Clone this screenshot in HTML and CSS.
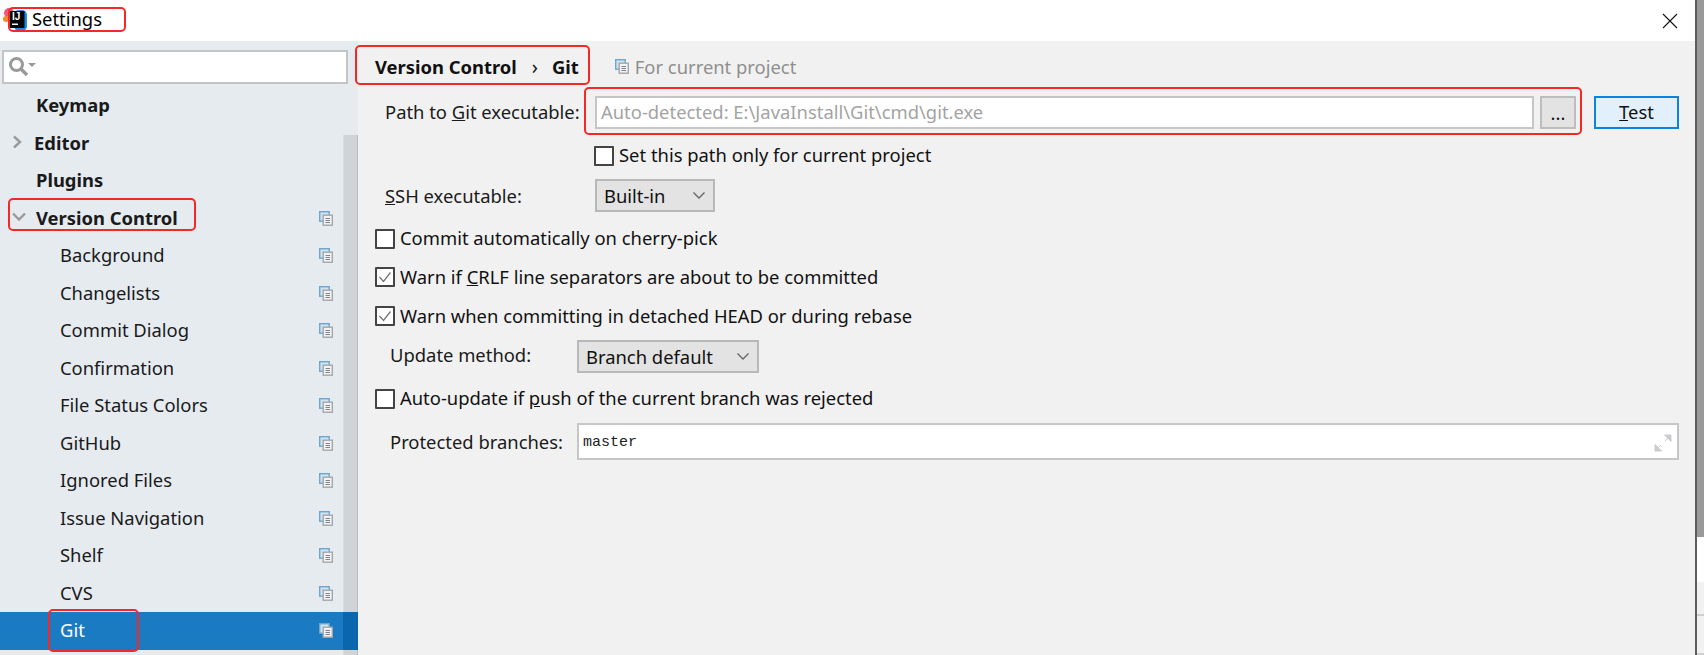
FILE: index.html
```html
<!DOCTYPE html>
<html lang="en">
<head>
  <meta charset="UTF-8">
  <title>Settings</title>
  <link rel="stylesheet" href="styles.css">
</head>
<body>
  <svg width="0" height="0" class="defs">
    <symbol id="copy" viewBox="0 0 14 15">
      <rect x="0.7" y="0.7" width="9.5" height="9.5" fill="#cfe2f0" stroke="#6ea6cc" stroke-width="1.4"/>
      <rect x="4.2" y="4.2" width="9.1" height="10" fill="#f2f2f2" stroke="#a3a7aa" stroke-width="1.4"/>
      <path d="M6.500 7.500h4.500M6.500 9.500h4.500M6.500 11.500h4.500" stroke="#7f8489" fill="none"/>
    </symbol>
  </svg>

  <div class="dialog">
    <div class="titlebar">
      <svg class="app-icon" width="26" height="26" viewBox="0 0 26 26">
        <circle cx="7" cy="6" r="5" fill="#f0567f"/>
        <circle cx="4" cy="12" r="3" fill="#f58a2e"/>
        <rect x="12" y="3" width="13" height="21" rx="5" fill="#1f8ceb"/>
        <rect x="8" y="4" width="14.500" height="17" fill="#000"/>
        <text x="10" y="13" class="app-icon-text">IJ</text>
        <rect x="10" y="16.500" width="6" height="1.500" fill="#fff"/>
      </svg>
      <span class="title">Settings</span>
      <svg class="close" width="16" height="16" viewBox="0 0 16 16">
        <path d="M1 1l14 14M15 1L1 15" stroke="#111" stroke-width="1.1" fill="none"/>
      </svg>
    </div>

    <div class="main">
      <!-- left tree -->
      <div class="sidebar">
        <div class="search">
          <svg width="30" height="22" viewBox="0 0 30 22">
            <circle cx="8.500" cy="8.500" r="6" fill="none" stroke="#999" stroke-width="3"/>
            <path d="M13 13l6 6" stroke="#999" stroke-width="3.400" fill="none"/>
            <path d="M20 7h8l-4 4z" fill="#999"/>
          </svg>
        </div>
        <div class="tree">
          <div class="row"><span class="top-label">Keymap</span></div>
          <div class="row">
            <svg class="arrow" width="12" height="14" viewBox="0 0 12 14"><path d="M3 1.500l6 5.500-6 5.500" stroke="#9a9a9a" stroke-width="2.400" fill="none"/></svg>
            <span class="top-label arrowed">Editor</span>
          </div>
          <div class="row"><span class="top-label">Plugins</span></div>
          <div class="row">
            <svg class="arrow" width="16" height="12" viewBox="0 0 16 12"><path d="M2 2.500l6 6 6-6" stroke="#9a9a9a" stroke-width="2.400" fill="none"/></svg>
            <span class="top-label">Version Control</span>
            <svg class="copy"><use href="#copy"/></svg>
          </div>
          <div class="row child">Background<svg class="copy"><use href="#copy"/></svg></div>
          <div class="row child">Changelists<svg class="copy"><use href="#copy"/></svg></div>
          <div class="row child">Commit Dialog<svg class="copy"><use href="#copy"/></svg></div>
          <div class="row child">Confirmation<svg class="copy"><use href="#copy"/></svg></div>
          <div class="row child">File Status Colors<svg class="copy"><use href="#copy"/></svg></div>
          <div class="row child">GitHub<svg class="copy"><use href="#copy"/></svg></div>
          <div class="row child">Ignored Files<svg class="copy"><use href="#copy"/></svg></div>
          <div class="row child">Issue Navigation<svg class="copy"><use href="#copy"/></svg></div>
          <div class="row child">Shelf<svg class="copy"><use href="#copy"/></svg></div>
          <div class="row child">CVS<svg class="copy"><use href="#copy"/></svg></div>
          <div class="row child selected">Git<svg class="copy"><use href="#copy"/></svg><span class="thumb-over"></span></div>
        </div>
        <div class="scrollbar"></div>
      </div>

      <!-- right panel -->
      <div class="panel">
        <div class="crumbs">
          <span class="crumb">Version Control</span>
          <span class="crumb-sep">›</span>
          <span class="crumb">Git</span>
          <svg class="crumb-icon"><use href="#copy"/></svg>
          <span class="crumb-note">For current project</span>
        </div>

        <div class="form-row">
          <span class="label path-label raised">Path to <u>G</u>it executable:</span>
          <div class="input path-input"><span class="raised">Auto-detected: E:\JavaInstall\Git\cmd\git.exe</span></div>
          <div class="btn dots">...</div>
          <div class="btn test"><span class="raised"><u>T</u>est</span></div>
        </div>

        <div class="form-row check-row indented gap-17">
          <span class="check"></span><span class="lifted">Set this path only for current project</span>
        </div>

        <div class="form-row gap-13">
          <span class="label path-label"><u>S</u>SH executable:</span>
          <div class="combo ssh">Built-in
            <svg width="14" height="9" viewBox="0 0 14 9"><path d="M1.500 1.500l5.500 5.500 5.500-5.500" stroke="#666" stroke-width="1.400" fill="none"/></svg>
          </div>
        </div>

        <div class="form-row check-row plain gap-17">
          <span class="check"></span><span class="lifted">Commit automatically on cherry-pick</span>
        </div>
        <div class="form-row check-row plain gap-18">
          <span class="check"><svg width="16" height="16" viewBox="0 0 16 16"><path d="M2.500 8l4 4.500 7-9" stroke="#777" stroke-width="1.300" fill="none"/></svg></span><span class="raised">Warn if <u>C</u>RLF line separators are about to be committed</span>
        </div>
        <div class="form-row check-row plain gap-19">
          <span class="check"><svg width="16" height="16" viewBox="0 0 16 16"><path d="M2.500 8l4 4.500 7-9" stroke="#777" stroke-width="1.300" fill="none"/></svg></span><span class="raised">Warn when committing in detached HEAD or during rebase</span>
        </div>

        <div class="form-row gap-14">
          <span class="label update-label lifted">Update method:</span>
          <div class="combo update">Branch default
            <svg width="14" height="9" viewBox="0 0 14 9"><path d="M1.500 1.500l5.500 5.500 5.500-5.500" stroke="#666" stroke-width="1.400" fill="none"/></svg>
          </div>
        </div>

        <div class="form-row check-row plain gap-16">
          <span class="check"></span><span class="lifted">Auto-update if <u>p</u>ush of the current branch was rejected</span>
        </div>

        <div class="form-row gap-14">
          <span class="label update-label">Protected branches:</span>
          <div class="input branches">
            <span class="mono">master</span>
            <svg width="18" height="18" viewBox="0 0 18 18"><path d="M10.500 1H17v6.500zM1 10.500V17h6.500zM15 3L11 7M3 15l4-4" fill="#c9ccce" stroke="#c9ccce"/></svg>
          </div>
        </div>
      </div>
    </div>
  </div>

  <div class="edge">
    <div class="edge-gray"></div>
    <div class="edge-white"></div>
    <div class="edge-low"></div>
    <div class="edge-low short"></div>
  </div>

  <!-- red marks drawn on the screenshot -->
  <div class="mark mark-title"></div>
  <div class="mark mark-vc"></div>
  <div class="mark mark-git"></div>
  <div class="mark mark-crumb"></div>
  <div class="mark mark-path"></div>
</body>
</html>
```

FILE: styles.css
```css
body {
  margin: 0;
  width: 1704px;
  height: 655px;
  overflow: hidden;
  position: relative;
  display: flex;
  background-color: #fff;
  color: #111;
  font-family: "Noto Sans", "Open Sans", Arial, sans-serif;
  font-size: 18.400px;
}
.defs {
  position: absolute;
}
.dialog {
  flex: 1;
  min-width: 0;
  display: flex;
  flex-direction: column;
}
.raised {
  margin-bottom: 2px;
}
.lifted {
  margin-bottom: 4px;
}

/* title bar */
.titlebar {
  height: 41px;
  flex: none;
  display: flex;
  align-items: center;
  padding-left: 2px;
  padding-right: 17px;
  background-color: #fff;
}
.app-icon {
  margin-top: -2px;
  flex: none;
}
.app-icon-text {
  fill: #fff;
  font-family: "Liberation Sans", Arial, sans-serif;
  font-size: 10px;
  font-weight: bold;
}
.title {
  margin-left: 4px;
  margin-bottom: 4px;
  color: #000;
}
.close {
  margin-left: auto;
}

.main {
  flex: 1;
  min-height: 0;
  display: flex;
}

/* sidebar */
.sidebar {
  width: 358px;
  flex: none;
  position: relative;
  background-color: #e6ebf0;
}
.search {
  height: 30px;
  width: 338px;
  margin: 9px 0 3px 2px;
  padding: 0 0 0 4px;
  display: flex;
  align-items: center;
  background-color: #fff;
  border: 2px solid #c2c4c6;
}
.row {
  height: 37.500px;
  box-sizing: border-box;
  padding-bottom: 2px;
  display: flex;
  align-items: center;
  position: relative;
  color: #1a1a1a;
}
.top-label {
  margin-left: 36px;
  font-weight: bold;
}
.arrow {
  margin-left: 11px;
  flex: none;
}
.arrow + .top-label {
  margin-left: 9px;
}
.arrow + .top-label.arrowed {
  margin-left: 11px;
}
.child {
  padding-left: 60px;
}
.copy {
  position: absolute;
  left: 319px;
  top: 11px;
  width: 14px;
  height: 15px;
}
.selected {
  background-color: #1a7bc3;
  color: #fff;
}
.thumb-over {
  position: absolute;
  right: 0;
  top: 0;
  bottom: 0;
  width: 15px;
  background-color: #0a66ad;
  z-index: 1;
}
.scrollbar {
  position: absolute;
  right: 0;
  top: 94px;
  bottom: 0;
  width: 13px;
  background-color: #cfd4d8;
  border-left: 1px solid #d9dee2;
  border-right: 1px solid #b9bdc0;
}

/* right panel */
.panel {
  flex: 1;
  min-width: 0;
  padding: 0 16px 0 0;
  background-color: #f1f1f1;
}
.crumbs {
  height: 50px;
  display: flex;
  align-items: center;
  padding-left: 17px;
  margin-bottom: 5px;
}
.crumb {
  font-weight: bold;
  color: #111;
}
.crumb-sep {
  margin: 0 14px 0 15px;
  font-size: 20px;
}
.crumb-icon {
  width: 14px;
  height: 15px;
  margin-left: 36px;
  margin-right: 6px;
}
.crumb-note {
  color: #8f8f8f;
}

.form-row {
  display: flex;
  align-items: center;
}
.gap-13 { margin-top: 13px; }
.gap-14 { margin-top: 14px; }
.gap-16 { margin-top: 16px; }
.gap-17 { margin-top: 17px; }
.gap-18 { margin-top: 18px; }
.gap-19 { margin-top: 19px; }

.label {
  flex: none;
  color: #1a1a1a;
}
.path-label {
  width: 210px;
  margin-left: 27px;
}
.update-label {
  width: 187px;
  margin-left: 32px;
}
.input {
  flex: 1;
  min-width: 0;
  height: 33px;
  box-sizing: border-box;
  display: flex;
  align-items: center;
  background-color: #fff;
  border: 2px solid #c6c6c6;
}
.path-input {
  padding-left: 4px;
  color: #a3a3a3;
}
.btn {
  flex: none;
  height: 33px;
  box-sizing: border-box;
  display: flex;
  align-items: center;
  justify-content: center;
}
.dots {
  width: 36px;
  margin-left: 6px;
  background-color: #e3e3e3;
  border: 2px solid #bdbdbd;
}
.test {
  width: 85px;
  margin-left: 18px;
  background-color: #e1f0fa;
  border: 2px solid #0a84e0;
}
.check-row {
  height: 20px;
}
.indented {
  padding-left: 236px;
}
.plain {
  padding-left: 17px;
}
.check {
  width: 20px;
  height: 20px;
  box-sizing: border-box;
  margin-right: 5px;
  flex: none;
  display: flex;
  align-items: center;
  justify-content: center;
  background-color: #fff;
  border: 2px solid #444;
  border-radius: 1px;
}
.combo {
  height: 33px;
  box-sizing: border-box;
  flex: none;
  display: flex;
  align-items: center;
  justify-content: space-between;
  padding: 0 7px 0 7px;
  background-color: #e3e3e3;
  border: 2px solid #b8b8b8;
}
.ssh {
  width: 120px;
}
.update {
  width: 182px;
}
.branches {
  height: 37px;
  justify-content: space-between;
  padding: 2px 5px 0 4px;
}
.mono {
  font-family: "Liberation Mono", "Courier New", monospace;
  font-size: 15px;
  color: #222;
}

/* strip of what lies behind the dialog */
.edge {
  width: 9px;
  flex: none;
  box-sizing: border-box;
  display: flex;
  flex-direction: column;
  border-left: 2px solid #5e5e5e;
}
.edge-gray {
  height: 537px;
  background-color: #999;
}
.edge-white {
  height: 45px;
  background-color: #fff;
}
.edge-low {
  height: 32px;
  background-color: #f2f2f2;
  border-bottom: 2px solid #cfcfcf;
}
.edge-low.short {
  height: 37px;
}

.mark {
  position: absolute;
  box-sizing: border-box;
  border: 2px solid #f52828;
  border-radius: 5px;
}
.mark-title { left: 8px; top: 7px; width: 118px; height: 25px; }
.mark-vc { left: 8px; top: 198px; width: 188px; height: 33px; }
.mark-git { left: 48px; top: 609px; width: 91px; height: 43px; }
.mark-crumb { left: 355px; top: 45px; width: 235px; height: 40px; }
.mark-path { left: 584px; top: 87px; width: 998px; height: 48px; }
```
